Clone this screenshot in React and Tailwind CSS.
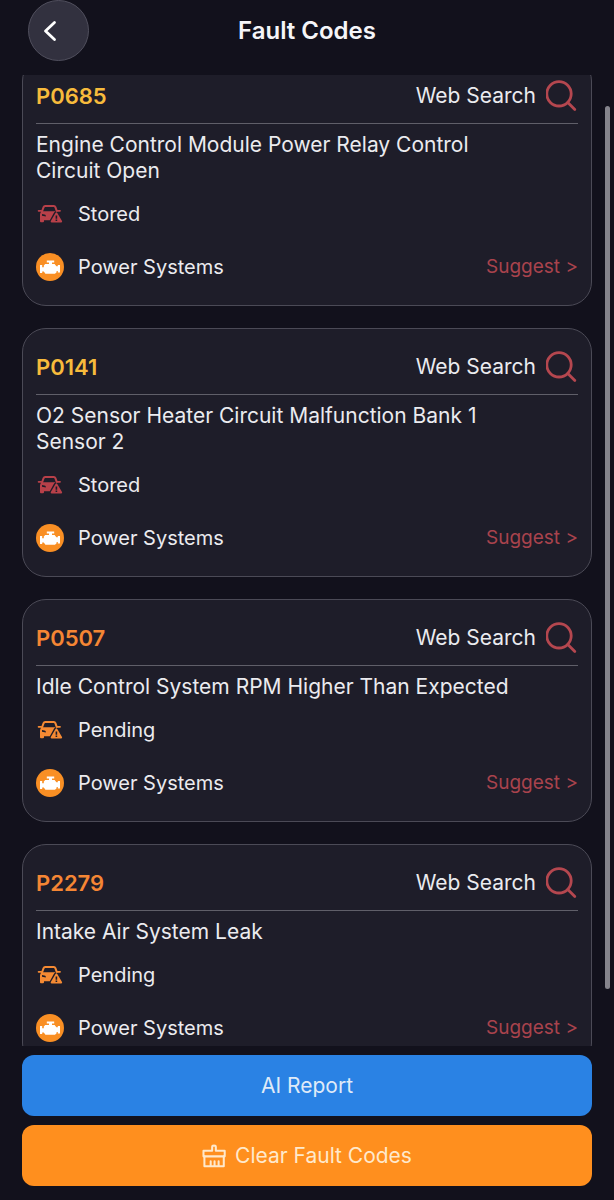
import { useLayoutEffect, useRef } from 'react'

const faults = [
  {
    code: 'P0685',
    title: 'Engine Control Module Power Relay Control Circuit Open',
    status: 'Stored',
    system: 'Power Systems',
  },
  {
    code: 'P0141',
    title: 'O2 Sensor Heater Circuit Malfunction Bank 1 Sensor 2',
    status: 'Stored',
    system: 'Power Systems',
  },
  {
    code: 'P0507',
    title: 'Idle Control System RPM Higher Than Expected',
    status: 'Pending',
    system: 'Power Systems',
  },
  {
    code: 'P2279',
    title: 'Intake Air System Leak',
    status: 'Pending',
    system: 'Power Systems',
  },
]

const codeColors = {
  Stored: 'text-[#f7bb3c]',
  Pending: 'text-[#f58634]',
}

const statusColors = {
  Stored: 'text-[#b84049]',
  Pending: 'text-[#f58a33]',
}

function SearchIcon() {
  return (
    <svg viewBox="0 0 32 32" className="h-8 w-8" fill="none" stroke="currentColor" strokeWidth="2.8" strokeLinecap="round">
      <circle cx="13" cy="13.8" r="12.2" />
      <path d="M21.8 22.6L28.8 29.6" />
    </svg>
  )
}

function CarWarningIcon() {
  return (
    <svg viewBox="0 0 28 28" className="h-7 w-7" fill="none">
      {/* roof and mirrors */}
      <path d="M5.8 12L7.6 7.2Q8 6 9.2 6H17.8Q19 6 19.4 7.2L21 11.6" stroke="currentColor" strokeWidth="2" />
      <path d="M2.6 10.8H5.2M21.4 10.8H24" stroke="currentColor" strokeWidth="1.8" strokeLinecap="round" />
      {/* body */}
      <path
        fillRule="evenodd"
        fill="currentColor"
        d="M6 11.2H19.6Q18.4 11.8 17.8 13L13.8 20.2H8V21.2Q8 22.2 7 22.2H5Q4 22.2 4 21.2V14.4Q4 12.2 6 11.2ZM6 14V15.8L9.8 16.6V15.4Q9.4 14.6 8.4 14.4Z"
      />
      {/* warning triangle */}
      <path
        fillRule="evenodd"
        fill="currentColor"
        d="M19.5 13Q20.4 11.6 21.3 13L26 21Q26.6 22.4 25.2 22.4H15.6Q14.2 22.4 14.8 21ZM19.6 15.4V18.8H21.2V15.4ZM19.6 19.6V21H21.2V19.6Z"
      />
    </svg>
  )
}

function EngineIcon() {
  return (
    <svg viewBox="0 0 28 28" className="h-7 w-7">
      <circle cx="14" cy="14" r="14" fill="#f98f24" />
      <path
        fill="#fff"
        d="M10.8 7.6H18.2V9.4H16V11H18.6L20.4 13.2H21.8V12H24V19.6H21.8V18H20.6V19.2L19 20.8H9.4L7.8 18.6H6.2V20H4V12H6.2V14.2H7.8V12.4L9.2 11H13V9.4H10.8Z"
      />
    </svg>
  )
}

function BrushIcon() {
  return (
    <svg viewBox="0 0 26 26" className="h-6 w-6" fill="none" stroke="currentColor" strokeWidth="2.2" strokeLinejoin="round" strokeLinecap="round">
      <path d="M11 7.4V3.2Q11 1.6 13 1.6T15 3.2V7.4H24.6V13.4H1.6V7.4Z" />
      <path d="M2.6 13.4V24H23.6V13.4M9.4 18.6V23.4M13.6 18.6V23.4M18 18.6V23.4" />
    </svg>
  )
}

function FaultCard({ fault }) {
  return (
    <article className="rounded-3xl border border-[#4b4a56] bg-[#1e1d29] px-[13px] pt-[22px] pb-6">
      <div className="flex items-center justify-between border-b border-[#605f69] pb-[11px]">
        <h2 className={`text-[22px] leading-8 font-semibold ${codeColors[fault.status]}`}>{fault.code}</h2>
        <button type="button" className="flex items-center gap-[10px]">
          <span>Web Search</span>
          <span className="text-[#b5474f]">
            <SearchIcon />
          </span>
        </button>
      </div>

      <p className="mt-2 pr-10 leading-[26px]">{fault.title}</p>

      <div className="mt-4 flex h-7 items-center gap-[14px] text-[20px]">
        <span className={statusColors[fault.status]}>
          <CarWarningIcon />
        </span>
        <span>{fault.status}</span>
      </div>

      <div className="mt-[25px] flex h-7 items-center gap-[14px] text-[20px]">
        <EngineIcon />
        <span>{fault.system}</span>
        <a href="#suggest" className="ml-auto text-[19px] text-[#a9434d]">
          Suggest &gt;
        </a>
      </div>
    </article>
  )
}

export default function App() {
  const listRef = useRef(null)

  useLayoutEffect(() => {
    listRef.current.scrollTop = 18
  }, [])

  return (
    <div className="relative flex h-screen flex-col bg-[#12111c] font-['Inter',sans-serif] text-[21px] text-[#ebebef]">
      <header className="grid grid-cols-[1fr_auto_1fr] items-center px-7 pb-[14px]">
        <button
          type="button"
          aria-label="Back"
          className="flex h-[61px] w-[61px] items-center rounded-full border border-[#504f5d] bg-[#32313f] pl-[14px]"
        >
          <svg viewBox="0 0 16 24" className="h-6 w-4" fill="none" stroke="#fff" strokeWidth="2.8" strokeLinecap="round" strokeLinejoin="round">
            <path d="M11.5 3.5L2.5 12L11.5 20.5" />
          </svg>
        </button>
        <h1 className="text-[24px] font-semibold text-[#f5f5f8]">Fault Codes</h1>
      </header>

      <main
        ref={listRef}
        className="flex min-h-0 flex-1 flex-col gap-[22px] overflow-y-auto px-[22px] [scrollbar-width:none] *:shrink-0"
      >
        {faults.map((fault) => (
          <FaultCard key={fault.code} fault={fault} />
        ))}
      </main>

      <footer className="flex flex-col gap-[9px] px-[22px] pt-[9px] pb-[14px]">
        <button type="button" className="h-[61px] rounded-xl bg-[#2a82e4] text-[#dfeaf8]">
          AI Report
        </button>
        <button
          type="button"
          className="flex h-[61px] items-center justify-center gap-[9px] rounded-xl bg-[#ff8f1e] text-[#ffe9cc]"
        >
          <BrushIcon />
          Clear Fault Codes
        </button>
      </footer>

      {/* scroll indicator */}
      <div className="absolute top-[106px] right-1 bottom-[211px] w-[5px] rounded-full bg-[#85848c]" />
    </div>
  )
}
